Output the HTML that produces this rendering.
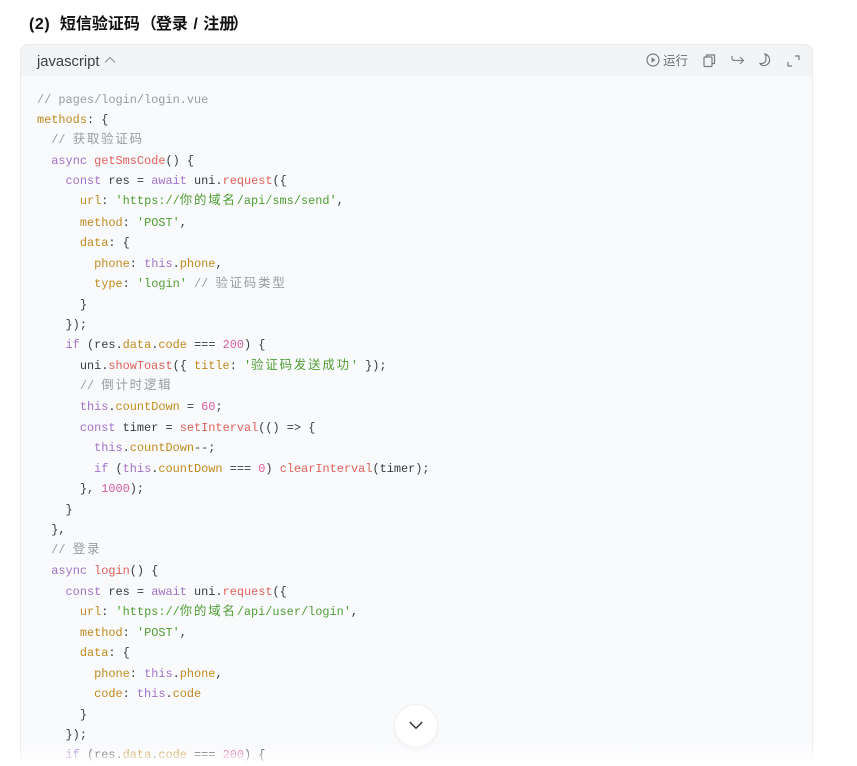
<!DOCTYPE html>
<html lang="zh">
<head>
<meta charset="utf-8">
<style>
html,body{margin:0;padding:0;background:#fff;width:857px;height:766px;overflow:hidden;}
body{position:relative;font-family:"Liberation Sans","Noto Sans CJK SC",sans-serif;}
#wrap{position:absolute;left:0;top:0;width:857px;height:766px;overflow:hidden;}
.title{position:absolute;left:29px;top:13px;font-size:16px;line-height:24px;font-weight:700;color:#111;white-space:pre;font-family:"Liberation Sans","Noto Sans CJK SC",sans-serif;}
.title i{font-style:normal;letter-spacing:.6px;margin-right:9.5px;}
.title b{font-weight:700;word-spacing:1px;}
.title u{text-decoration:none;position:relative;}
.card{position:absolute;left:20px;top:44px;width:791px;height:721px;border:1px solid #e9ebee;border-bottom:0;border-radius:8px 8px 0 0;background:#f9fafc;overflow:hidden;}
.head{position:absolute;left:0;top:0;right:0;height:31px;background:#f3f4f6;}
.lang{position:absolute;left:16px;top:7px;font-size:14.8px;line-height:20px;color:#3c3f45;}
.run{position:absolute;left:642px;top:6px;font-size:12.5px;line-height:18px;color:#6b6f76;font-family:"Noto Sans CJK SC",sans-serif;}
.code{position:absolute;left:0;top:0;width:791px;}
.line{position:absolute;left:16px;height:20px;line-height:20px;white-space:pre;font-family:"Liberation Mono",monospace;font-size:11.9px;color:#383a42;}
.line .z{font-family:"Noto Sans CJK SC",sans-serif;font-size:12.4px;letter-spacing:1.85px;line-height:0;}
.g{color:#999b9f}.k{color:#a272c9}.p{color:#c18a1d}.f{color:#e0605a}.s{color:#4f9e32}.n{color:#d85c9e}
.fade{position:absolute;left:0;top:744px;width:857px;height:22px;background:linear-gradient(to bottom,rgba(255,255,255,0),#fff 95%);}
.btn{position:absolute;left:394px;top:704px;width:42px;height:42px;border:1px solid #f0f0f0;border-radius:50%;background:#fff;box-shadow:0 1px 4px rgba(0,0,0,.03);}
svg{position:absolute;overflow:visible;}
</style>
</head>
<body>
<div id="wrap">
<div class="title"><i>(2)</i><b>短信验证码<u style="left:1px">（</u>登录 / 注册<u style="left:-3px">）</u></b></div>
<div class="card">
  <div class="head">
    <div class="lang">javascript</div>
    <svg style="left:83px;top:11px" width="12" height="8" viewBox="0 0 12 8"><path d="M1 6.5 L6 1.5 L11 6.5" fill="none" stroke="#8a8e94" stroke-width="1"/></svg>
    <svg style="left:625px;top:8px" width="14" height="14" viewBox="0 0 14 14"><circle cx="7" cy="7" r="6" fill="none" stroke="#777b82" stroke-width="1.2"/><path d="M5.5 4.3 L9.5 7 L5.5 9.7 Z" fill="#777b82"/></svg>
    <div class="run">运行</div>
    <svg style="left:682px;top:9px" width="13" height="13" viewBox="0 0 13 13"><path d="M3.5 3 V1 H11.5 V9.5 H9" fill="none" stroke="#777b82" stroke-width="1.2"/><rect x="1" y="3" width="8" height="9.5" rx="1" fill="none" stroke="#777b82" stroke-width="1.2"/></svg>
    <svg style="left:710px;top:10px" width="14" height="11" viewBox="0 0 14 11"><path d="M1 1 V3 Q1 5.5 4 5.5 H12.5 M9 2 L12.5 5.5 L9 9" fill="none" stroke="#7f8389" stroke-width="1.2"/></svg>
    <svg style="left:738px;top:8px" width="13" height="14" viewBox="0 0 13 14"><path d="M6 1 C9.5 2 11 5 10.5 8 C10 11 7 13 4 12.5 C2.5 12.2 1.5 11.5 1 10.5 C4 11 7 9.5 7 6 C7 4 6.8 2.5 6 1 Z" fill="none" stroke="#777b82" stroke-width="1.2"/></svg>
    <svg style="left:766px;top:10px" width="13" height="12" viewBox="0 0 13 12"><path d="M8 1 H12 V5 M1 7 V11 H5" fill="none" stroke="#777b82" stroke-width="1.2"/></svg>
  </div>
  <div class="code">
  <div class="line" style="top:44.5px"><span class="g">// pages/login/login.vue</span></div>
  <div class="line" style="top:65px"><span class="p">methods</span>: {</div>
  <div class="line" style="top:85px">  <span class="g">// <span class="z">获取验证码</span></span></div>
  <div class="line" style="top:106px">  <span class="k">async</span> <span class="f">getSmsCode</span>() {</div>
  <div class="line" style="top:126px">    <span class="k">const</span> res = <span class="k">await</span> uni.<span class="f">request</span>({</div>
  <div class="line" style="top:146px">      <span class="p">url</span>: <span class="s">'https://<span class="z">你的域名</span>/api/sms/send'</span>,</div>
  <div class="line" style="top:168px">      <span class="p">method</span>: <span class="s">'POST'</span>,</div>
  <div class="line" style="top:188px">      <span class="p">data</span>: {</div>
  <div class="line" style="top:209px">        <span class="p">phone</span>: <span class="k">this</span>.<span class="p">phone</span>,</div>
  <div class="line" style="top:229px">        <span class="p">type</span>: <span class="s">'login'</span> <span class="g">// <span class="z">验证码类型</span></span></div>
  <div class="line" style="top:250px">      }</div>
  <div class="line" style="top:270px">    });</div>
  <div class="line" style="top:290px">    <span class="k">if</span> (res.<span class="p">data</span>.<span class="p">code</span> === <span class="n">200</span>) {</div>
  <div class="line" style="top:311px">      uni.<span class="f">showToast</span>({ <span class="p">title</span>: <span class="s">'<span class="z">验证码发送成功</span>'</span> });</div>
  <div class="line" style="top:331px">      <span class="g">// <span class="z">倒计时逻辑</span></span></div>
  <div class="line" style="top:352px">      <span class="k">this</span>.<span class="p">countDown</span> = <span class="n">60</span>;</div>
  <div class="line" style="top:373px">      <span class="k">const</span> timer = <span class="f">setInterval</span>(() =&gt; {</div>
  <div class="line" style="top:393px">        <span class="k">this</span>.<span class="p">countDown</span>--;</div>
  <div class="line" style="top:414px">        <span class="k">if</span> (<span class="k">this</span>.<span class="p">countDown</span> === <span class="n">0</span>) <span class="f">clearInterval</span>(timer);</div>
  <div class="line" style="top:434px">      }, <span class="n">1000</span>);</div>
  <div class="line" style="top:455px">    }</div>
  <div class="line" style="top:475px">  },</div>
  <div class="line" style="top:495px">  <span class="g">// <span class="z">登录</span></span></div>
  <div class="line" style="top:516px">  <span class="k">async</span> <span class="f">login</span>() {</div>
  <div class="line" style="top:537px">    <span class="k">const</span> res = <span class="k">await</span> uni.<span class="f">request</span>({</div>
  <div class="line" style="top:557px">      <span class="p">url</span>: <span class="s">'https://<span class="z">你的域名</span>/api/user/login'</span>,</div>
  <div class="line" style="top:578px">      <span class="p">method</span>: <span class="s">'POST'</span>,</div>
  <div class="line" style="top:598px">      <span class="p">data</span>: {</div>
  <div class="line" style="top:619px">        <span class="p">phone</span>: <span class="k">this</span>.<span class="p">phone</span>,</div>
  <div class="line" style="top:639px">        <span class="p">code</span>: <span class="k">this</span>.<span class="p">code</span></div>
  <div class="line" style="top:660px">      }</div>
  <div class="line" style="top:680px">    });</div>
  <div class="line" style="top:700px">    <span class="k">if</span> (res.<span class="p">data</span>.<span class="p">code</span> === <span class="n">200</span>) {</div>
  </div>
</div>
<div class="fade"></div>
<div class="btn">
  <svg style="left:14px;top:16px" width="14" height="9" viewBox="0 0 14 9"><path d="M0.7 1 L7 7.3 L13.3 1" fill="none" stroke="#333" stroke-width="1.4"/></svg>
</div>
</div>
</body>
</html>
